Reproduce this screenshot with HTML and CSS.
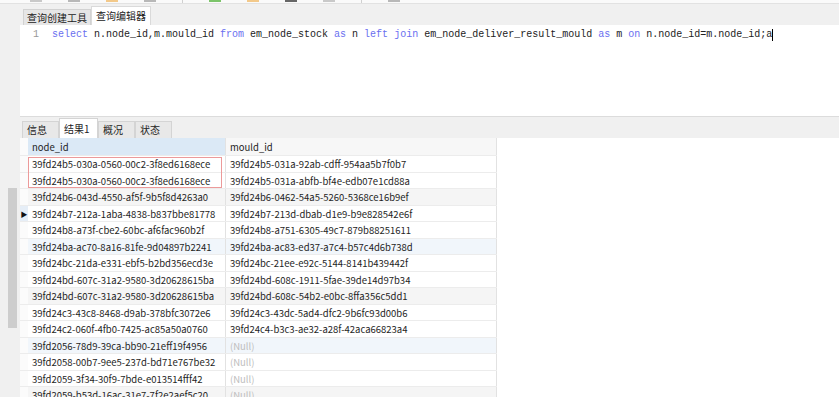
FILE: index.html
```html
<!DOCTYPE html>
<html>
<head>
<meta charset="utf-8">
<link rel="stylesheet" href="styles.css">
</head>
<body>
<div class="topstrip">
  <span class="ti g1"></span><span class="ti g2"></span><span class="ti o1"></span><span class="ti g2"></span>
  <span class="sep"></span>
  <span class="ti gr"></span><span class="ti o1"></span><span class="ti dk"></span><span class="ti g1"></span>
  <span class="sep"></span>
  <span class="ti g2"></span>
</div>
<div class="doctabs">
  <div class="dtab">查询创建工具</div>
  <div class="dtab active">查询编辑器</div>
</div>
<div class="main">
  <div class="leftpanel"><div class="thumb"></div></div>
  <div class="content">
    <div class="editor">
      <div class="gutter">1</div>
      <div class="code"><span class="kw">select</span> n.node_id,m.mould_id <span class="kw">from</span> em_node_stock <span class="kw">as</span> n <span class="kw">left</span> <span class="kw">join</span> em_node_deliver_result_mould <span class="kw">as</span> m <span class="kw">on</span> n.node_id=m.node_id;a<span class="caret"></span></div>
    </div>
    <div class="rtabs">
      <div class="rtab">信息</div>
      <div class="rtab active">结果1</div>
      <div class="rtab">概况</div>
      <div class="rtab">状态</div>
    </div>
    <div class="gridwrap">
      <div class="grid">
        <div class="row head"><div class="ind"></div><div class="c1 sel">node_id</div><div class="c2">mould_id</div></div>
        <div class="row"><div class="ind"></div><div class="c1">39fd24b5-030a-0560-00c2-3f8ed6168ece</div><div class="c2">39fd24b5-031a-92ab-cdff-954aa5b7f0b7</div></div>
        <div class="row"><div class="ind"></div><div class="c1">39fd24b5-030a-0560-00c2-3f8ed6168ece</div><div class="c2">39fd24b5-031a-abfb-bf4e-edb07e1cd88a</div></div>
        <div class="row t-gray"><div class="ind"></div><div class="c1">39fd24b6-043d-4550-af5f-9b5f8d4263a0</div><div class="c2">39fd24b6-0462-54a5-5260-5368ce16b9ef</div></div>
        <div class="row"><div class="ind cur">&#9654;</div><div class="c1">39fd24b7-212a-1aba-4838-b837bbe81778</div><div class="c2">39fd24b7-213d-dbab-d1e9-b9e828542e6f</div></div>
        <div class="row"><div class="ind"></div><div class="c1">39fd24b8-a73f-cbe2-60bc-af6fac960b2f</div><div class="c2">39fd24b8-a751-6305-49c7-879b88251611</div></div>
        <div class="row t-blue"><div class="ind"></div><div class="c1">39fd24ba-ac70-8a16-81fe-9d04897b2241</div><div class="c2">39fd24ba-ac83-ed37-a7c4-b57c4d6b738d</div></div>
        <div class="row"><div class="ind"></div><div class="c1">39fd24bc-21da-e331-ebf5-b2bd356ecd3e</div><div class="c2">39fd24bc-21ee-e92c-5144-8141b439442f</div></div>
        <div class="row"><div class="ind"></div><div class="c1">39fd24bd-607c-31a2-9580-3d20628615ba</div><div class="c2">39fd24bd-608c-1911-5fae-39de14d97b34</div></div>
        <div class="row t-gray"><div class="ind"></div><div class="c1">39fd24bd-607c-31a2-9580-3d20628615ba</div><div class="c2">39fd24bd-608c-54b2-e0bc-8ffa356c5dd1</div></div>
        <div class="row"><div class="ind"></div><div class="c1">39fd24c3-43c8-8468-d9ab-378bfc3072e6</div><div class="c2">39fd24c3-43dc-5ad4-dfc2-9b6fc93d00b6</div></div>
        <div class="row"><div class="ind"></div><div class="c1">39fd24c2-060f-4fb0-7425-ac85a50a0760</div><div class="c2">39fd24c4-b3c3-ae32-a28f-42aca66823a4</div></div>
        <div class="row t-blue"><div class="ind"></div><div class="c1">39fd2056-78d9-39ca-bb90-21eff19f4956</div><div class="c2 null">(Null)</div></div>
        <div class="row"><div class="ind"></div><div class="c1">39fd2058-00b7-9ee5-237d-bd71e767be32</div><div class="c2 null">(Null)</div></div>
        <div class="row"><div class="ind"></div><div class="c1">39fd2059-3f34-30f9-7bde-e013514fff42</div><div class="c2 null">(Null)</div></div>
        <div class="row t-gray"><div class="ind"></div><div class="c1">39fd2059-b53d-16ac-31e7-7f2e2aef5c20</div><div class="c2 null">(Null)</div></div>
      </div>
      <div class="redbox"></div>
    </div>
  </div>
</div>
</body>
</html>
```
FILE: styles.css
```css
html, body {
  margin: 0;
  padding: 0;
}
body {
  width: 839px;
  height: 397px;
  overflow: hidden;
  background: #ffffff;
  font-family: "Noto Sans CJK SC", "Noto Sans", sans-serif;
}
.topstrip {
  height: 3px;
  background: #fafafa;
  border-bottom: 1px solid #e2e2e2;
  display: flex;
  align-items: flex-start;
  padding-left: 30px;
  gap: 26px;
  overflow: hidden;
}
.ti {
  width: 12px;
  height: 2px;
  display: block;
}
.g1 { background: #c9c9c9; }
.g2 { background: #b8b8b8; }
.o1 { background: #f3c98a; }
.gr { background: #7cc46a; }
.dk { background: #666; }
.sep { width: 1px; height: 3px; background: #d0d0d0; }
.doctabs {
  height: 21px;
  background: #f0f0f0;
  display: flex;
  align-items: flex-end;
  padding-left: 23px;
}
.dtab {
  font-size: 10px;
  line-height: 15px;
  height: 15px;
  padding: 0 3px;
  color: #222;
  background: #e6e6e6;
  border: 1px solid #d2d2d2;
  border-bottom: none;
}
.dtab.active {
  background: #ffffff;
  height: 18px;
  line-height: 18px;
  padding: 0 4px;
  border-color: #dadada;
}
.main {
  display: flex;
  height: 372px;
}
.leftpanel {
  width: 20px;
  background: #f0f0f0;
  position: relative;
  flex: none;
}
.thumb {
  position: absolute;
  left: 8px;
  top: 163px;
  width: 9px;
  height: 140px;
  background: #cdcdcd;
}
.content {
  flex: 1;
  display: flex;
  flex-direction: column;
}
.editor {
  height: 91px;
  background: #ffffff;
  display: flex;
  flex: none;
}
.gutter {
  width: 32px;
  text-align: right;
  box-sizing: border-box;
  padding-top: 4px;
  font-family: "Liberation Mono", monospace;
  font-size: 10px;
  line-height: 12px;
  color: #999;
  padding-right: 13px;
}
.code {
  padding-top: 4px;
  font-family: "Liberation Mono", monospace;
  font-size: 10px;
  line-height: 12px;
  color: #222;
  white-space: pre;
}
.kw { color: #6a6ff0; }
.caret {
  display: inline-block;
  width: 1px;
  height: 12px;
  background: #000;
  vertical-align: top;
}
.rtabs {
  height: 21px;
  background: #f0f0f0;
  border-top: 1px solid #dcdcdc;
  display: flex;
  align-items: flex-end;
  padding-left: 2px;
  flex: none;
}
.rtab {
  font-size: 10px;
  height: 16px;
  line-height: 16px;
  padding: 0 4px;
  width: 27px;
  color: #222;
  background: #e8e8e8;
  border: 1px solid #d4d4d4;
  border-bottom: none;
}
.rtab.active {
  background: #ffffff;
  height: 19px;
  line-height: 19px;
  width: 29px;
}
.gridwrap {
  position: relative;
  flex: 1;
  overflow: hidden;
}
.grid {
  width: 477px;
  display: flex;
  flex-direction: column;
}
.row {
  display: flex;
  height: 16.5px;
  flex: none;
  border-bottom: 0.5px solid #ececec;
  box-sizing: border-box;
  font-size: 9.5px;
  line-height: 16px;
  color: #1e1e1e;
}
.row.head {
  height: 18px;
  line-height: 18px;
}
.row.head .c2 { background: #f7f7f7; }
.row.head .c1.sel { background: #dbe9f6; }
.ind {
  width: 8px;
  flex: none;
  font-size: 7px;
  color: #111;
  text-align: center;
  background: #fbfbfb;
}
.ind.cur {
  background: #e6eef7;
  line-height: 16px;
}
.c1 {
  width: 198px;
  flex: none;
  padding-left: 4px;
  box-sizing: border-box;
  border-right: 1px solid #e2e2e2;
  white-space: nowrap;
  overflow: hidden;
}
.c2 {
  width: 271px;
  flex: none;
  padding-left: 4px;
  box-sizing: border-box;
  border-right: 1px solid #e2e2e2;
  white-space: nowrap;
  overflow: hidden;
}
.t-gray { background: #f5f5f5; }
.t-blue { background: #f1f6fb; }
.null { color: #bdbdbd; }
.redbox {
  position: absolute;
  left: 8px;
  top: 19px;
  width: 194px;
  height: 31px;
  border: 1px solid #ec9a9a;
  box-sizing: border-box;
  pointer-events: none;
}
```
